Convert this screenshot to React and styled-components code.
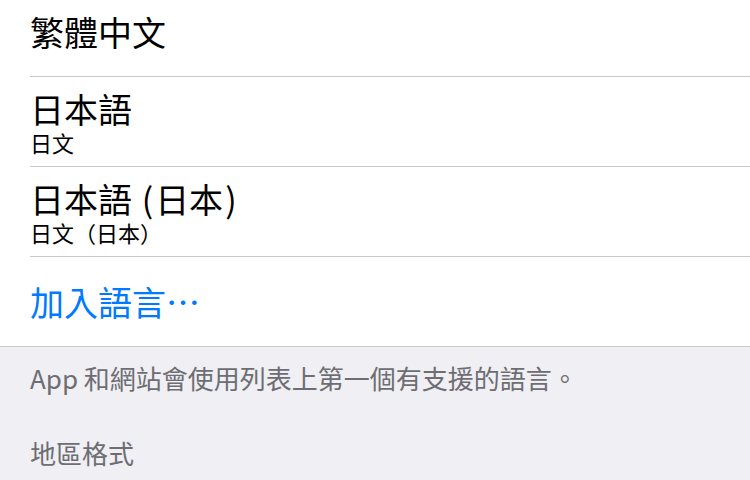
import React from "react";
import styled, { createGlobalStyle } from "styled-components";

const GlobalStyle = createGlobalStyle`
  html, body {
    margin: 0;
    padding: 0;
    background: #efeff4;
  }
  body {
    width: 750px;
    height: 480px;
    overflow: hidden;
    font-family: "Noto Sans CJK TC", "Noto Sans", "Liberation Sans", sans-serif;
    -webkit-font-smoothing: antialiased;
  }
`;

const Screen = styled.div`
  width: 750px;
  height: 480px;
  overflow: hidden;
  background: #efeff4;
`;

// the list is scrolled so that the first row is partly hidden
const Group = styled.ul`
  list-style: none;
  margin: -13px 0 0;
  padding: 0 0 0 30px;
  background: #fff;
  border-bottom: 1px solid #c8c7cc;
`;

const Row = styled.li`
  height: ${(p) => (p.$last ? "89px" : "90px")};
  box-sizing: border-box;
  display: flex;
  flex-direction: column;
  justify-content: center;
  border-bottom: ${(p) => (p.$last ? "none" : "1px solid #c8c7cc")};
`;

const Title = styled.span`
  font-size: 34px;
  line-height: 40px;
  color: ${(p) => (p.$action ? "#007aff" : "#000")};
  white-space: nowrap;
`;

const Paren = styled.span`
  margin: 0 2px;
`;

const Subtitle = styled.span`
  font-size: 22px;
  line-height: 26px;
  color: #000;
  white-space: nowrap;
`;

const Footer = styled.p`
  margin: 0;
  padding: 14px 30px 0;
  font-size: 26px;
  line-height: 34px;
  color: #6d6d72;
`;

const SectionHeader = styled.h2`
  margin: 0;
  padding: 41px 30px 0;
  font-size: 26px;
  line-height: 34px;
  font-weight: 400;
  color: #6d6d72;
`;

export default function App() {
  return (
    <>
      <GlobalStyle />
      <Screen>
        <Group>
          <Row>
            <Title>繁體中文</Title>
          </Row>
          <Row>
            <Title>日本語</Title>
            <Subtitle>日文</Subtitle>
          </Row>
          <Row>
            <Title>
              日本語 <Paren>(</Paren>日本<Paren>)</Paren>
            </Title>
            <Subtitle>日文（日本）</Subtitle>
          </Row>
          <Row $last>
            <Title $action>加入語言⋯</Title>
          </Row>
        </Group>
        <Footer>App 和網站會使用列表上第一個有支援的語言。</Footer>
        <SectionHeader>地區格式</SectionHeader>
      </Screen>
    </>
  );
}
